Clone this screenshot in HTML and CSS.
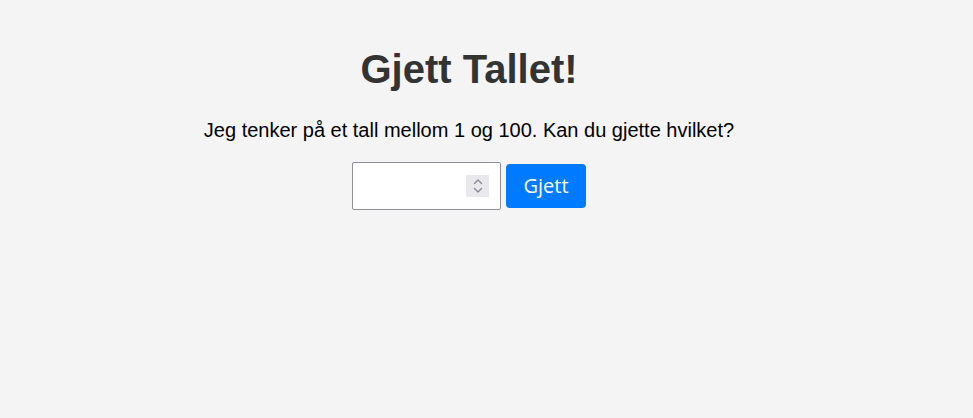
FILE: index.html
```html
<!DOCTYPE html>
<html lang="no">
<head>
<meta charset="utf-8">
<title>Gjett Tallet!</title>
<link rel="stylesheet" href="styles.css">
</head>
<body>
<main class="game">
  <h1 class="title">Gjett Tallet!</h1>
  <p class="intro">Jeg tenker på et tall mellom 1 og 100. Kan du gjette hvilket?</p>
  <div class="controls">
    <div class="field">
      <input class="guess" type="text" aria-label="Ditt gjett">
      <span class="spinner" aria-hidden="true">
        <svg width="12" height="18" viewBox="0 0 12 18"><path d="M2.5 6.5 L6 3 L9.5 6.5 M2.5 11.5 L6 15 L9.5 11.5" fill="none" stroke="#8a8a96" stroke-width="1.4" stroke-linecap="round" stroke-linejoin="round"/></svg>
      </span>
    </div>
    <button class="btn" type="button">Gjett</button>
  </div>
</main>
</body>
</html>
```

FILE: styles.css
```css
html, body {
  margin: 0;
}
body {
  background: #f4f4f4;
  padding: 20px 55px 20px 20px;
  font-family: "Liberation Sans", Arial, sans-serif;
  color: #000;
}
.game {
  text-align: center;
}
.title {
  font-size: 40px;
  font-weight: bold;
  color: #333;
  margin: 26.8px 0;
}
.intro {
  font-size: 20px;
  margin: 20px 0;
}
.controls {
  display: flex;
  justify-content: center;
  align-items: center;
  gap: 5px;
}
.field {
  display: flex;
  align-items: center;
  height: 46px;
  width: 136px;
  border: 1px solid #8f8f9d;
  border-radius: 2px;
  background: #fff;
  padding: 0 11px 0 0;
  box-sizing: content-box;
}
.guess {
  flex: 1;
  min-width: 0;
  border: 0;
  outline: 0;
  background: transparent;
  font-size: 18px;
  padding: 0 0 0 10px;
  height: 100%;
  font-family: inherit;
}
.spinner {
  width: 23px;
  height: 22px;
  background: #e9e9ed;
  display: flex;
  align-items: center;
  justify-content: center;
}
.spinner svg {
  display: block;
}
.btn {
  width: 80px;
  height: 44px;
  border: 0;
  border-radius: 4px;
  background: #007bff;
  color: #fff;
  font-family: "Open Sans", "Noto Sans", sans-serif;
  font-size: 20px;
  padding: 0;
}
```
